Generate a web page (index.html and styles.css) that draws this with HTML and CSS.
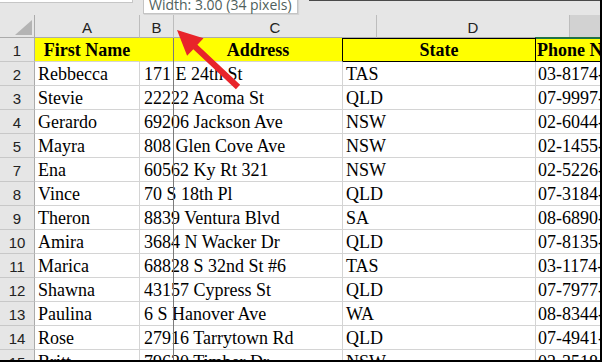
FILE: index.html
```html
<!DOCTYPE html>
<html>
<head>
<meta charset="utf-8">
<link rel="stylesheet" href="styles.css">
</head>
<body>
<div class="sheet">
  <div class="topbar">
    <div class="namebox"></div>
    <div class="gap"></div>
    <div class="fbar"></div>
    <div class="tip">Width: 3.00 (34 pixels)</div>
  </div>
  <div class="colhead">
    <div class="corner"><svg width="34" height="22" viewBox="0 0 34 22"><polygon points="15,20 32,20 32,5" fill="#b4b4b4"/></svg></div>
    <div class="ch">A</div>
    <div class="ch">B</div>
    <div class="ch">C</div>
    <div class="ch">D</div>
    <div class="ch sel"></div>
  </div>
  <div class="grid">
    <div class="rn">1</div><div class="c h">First Name</div><div class="c h"></div><div class="c h hc">Address</div><div class="c h hd">State</div><div class="c h he">Phone Number</div>
    <div class="rn">2</div><div class="c">Rebbecca</div><div class="c addr">171 E 24th St</div><div class="c"></div><div class="c">TAS</div><div class="c e">03-8174-9123</div>
    <div class="rn">3</div><div class="c">Stevie</div><div class="c addr">22222 Acoma St</div><div class="c"></div><div class="c">QLD</div><div class="c e">07-9997-3366</div>
    <div class="rn">4</div><div class="c">Gerardo</div><div class="c addr">69206 Jackson Ave</div><div class="c"></div><div class="c">NSW</div><div class="c e">02-6044-4682</div>
    <div class="rn">5</div><div class="c">Mayra</div><div class="c addr">808 Glen Cove Ave</div><div class="c"></div><div class="c">NSW</div><div class="c e">02-1455-6085</div>
    <div class="rn">7</div><div class="c">Ena</div><div class="c addr">60562 Ky Rt 321</div><div class="c"></div><div class="c">NSW</div><div class="c e">02-5226-9402</div>
    <div class="rn">8</div><div class="c">Vince</div><div class="c addr">70 S 18th Pl</div><div class="c"></div><div class="c">QLD</div><div class="c e">07-3184-9989</div>
    <div class="rn">9</div><div class="c">Theron</div><div class="c addr">8839 Ventura Blvd</div><div class="c"></div><div class="c">SA</div><div class="c e">08-6890-4661</div>
    <div class="rn">10</div><div class="c">Amira</div><div class="c addr">3684 N Wacker Dr</div><div class="c"></div><div class="c">QLD</div><div class="c e">07-8135-3271</div>
    <div class="rn">11</div><div class="c">Marica</div><div class="c addr">68828 S 32nd St #6</div><div class="c"></div><div class="c">TAS</div><div class="c e">03-1174-6817</div>
    <div class="rn">12</div><div class="c">Shawna</div><div class="c addr">43157 Cypress St</div><div class="c"></div><div class="c">QLD</div><div class="c e">07-7977-6039</div>
    <div class="rn">13</div><div class="c">Paulina</div><div class="c addr">6 S Hanover Ave</div><div class="c"></div><div class="c">WA</div><div class="c e">08-8344-8929</div>
    <div class="rn">14</div><div class="c">Rose</div><div class="c addr">27916 Tarrytown Rd</div><div class="c"></div><div class="c">QLD</div><div class="c e">07-4941-9471</div>
    <div class="rn">15</div><div class="c">Britt</div><div class="c addr">79620 Timber Dr</div><div class="c"></div><div class="c">NSW</div><div class="c e">02-3518-7078</div>
  </div>
  <div class="dragline"></div>
  <svg class="arrow" width="602" height="362" viewBox="0 0 602 362">
    <polygon points="177,30 203.5,38.2 197.4,44.8 240.1,84.8 235.9,89.2 193.3,49.2 187.1,55.8" fill="#e8242a"/>
  </svg>
</div>
</body>
</html>
```
FILE: styles.css
```css
html, body {
  margin: 0;
  padding: 0;
  background: #fff;
}
.sheet {
  position: relative;
  width: 600px;
  height: 360px;
  border-right: 2px solid #000;
  border-bottom: 2px solid #000;
  overflow: hidden;
  background: #fff;
}
.topbar {
  position: relative;
  display: flex;
  height: 15px;
  background: #e6e6e6;
}
.namebox {
  width: 132px;
  height: 2px;
  background: #fff;
  border-right: 1px solid #c6c6c6;
  border-bottom: 1px solid #c6c6c6;
}
.gap {
  width: 176px;
}
.fbar {
  flex: 1;
  height: 0;
  border-top: 1px solid #4a4a4a;
}
.tip {
  position: absolute;
  left: 143px;
  top: -5px;
  width: 155px;
  height: 19px;
  box-sizing: border-box;
  border: 1px solid #c4c4c4;
  background: #fff;
  box-shadow: 1px 1px 1px rgba(0,0,0,0.08);
  font-family: "Open Sans", "Liberation Sans", sans-serif;
  font-size: 14px;
  line-height: 16px;
  padding-top: 1px;
  color: #4f5f5c;
  padding-left: 5px;
  white-space: nowrap;
}
.colhead {
  position: relative;
  display: grid;
  grid-template-columns: 35px 105px 34px 203px 193px 30px;
  height: 23px;
  background: #e6e6e6;
}
.colhead::after {
  content: "";
  position: absolute;
  left: 535px;
  width: 65px;
  bottom: 0;
  height: 1px;
  background: #217346;
}
.corner {
  box-sizing: border-box;
  border-right: 1px solid #ababab;
  border-bottom: 1px solid #ababab;
}
.corner svg {
  display: block;
}
.ch {
  box-sizing: border-box;
  border-right: 1px solid #bdbdbd;
  border-bottom: 1px solid #ababab;
  text-align: center;
  font-family: "Liberation Sans", Arial, sans-serif;
  font-size: 15px;
  line-height: 19px;
  padding-top: 3px;
  color: #222;
}
.ch.sel {
  background: #d2d2d2;
  border-right: none;
}
.grid {
  display: grid;
  grid-template-columns: 35px 105px 34px 169px 193px 64px;
  grid-auto-rows: 24px;
}
.rn {
  box-sizing: border-box;
  background: #e6e6e6;
  border-right: 1px solid #ababab;
  border-bottom: 1px solid #c8c8c8;
  text-align: center;
  font-family: "Liberation Sans", Arial, sans-serif;
  font-size: 15px;
  line-height: 20px;
  padding-top: 3px;
  color: #222;
}
.c {
  box-sizing: border-box;
  min-width: 0;
  border-right: 1px solid #d4d4d4;
  border-bottom: 1px solid #d4d4d4;
  font-family: "Liberation Serif", "Times New Roman", serif;
  font-size: 18px;
  line-height: 21px;
  padding: 2px 0 0 3px;
  color: #000;
  white-space: nowrap;
}
.c.addr {
  padding-left: 4px;
  overflow: visible;
}
.c.e {
  overflow: hidden;
  border-right: none;
  padding-left: 2px;
}
.c.h {
  background: #ffff00;
  font-weight: bold;
  text-align: center;
  padding-left: 0;
  border-right-color: #ffff00;
}
.c.h.hc {
  border-right-color: #000;
}
.c.h.hd {
  border-right-color: #000;
  border-bottom-color: #000;
  box-shadow: inset 0 1px 0 #000;
}
.c.h.he {
  text-align: left;
  padding-left: 1px;
  overflow: hidden;
  border-right: none;
  border-bottom-color: #000;
  box-shadow: inset 0 1px 0 #217346;
}
.dragline {
  position: absolute;
  left: 173px;
  top: 38px;
  bottom: 0;
  width: 1px;
  background: #7a7a7a;
}
.arrow {
  position: absolute;
  left: 0;
  top: 0;
  pointer-events: none;
}
```
